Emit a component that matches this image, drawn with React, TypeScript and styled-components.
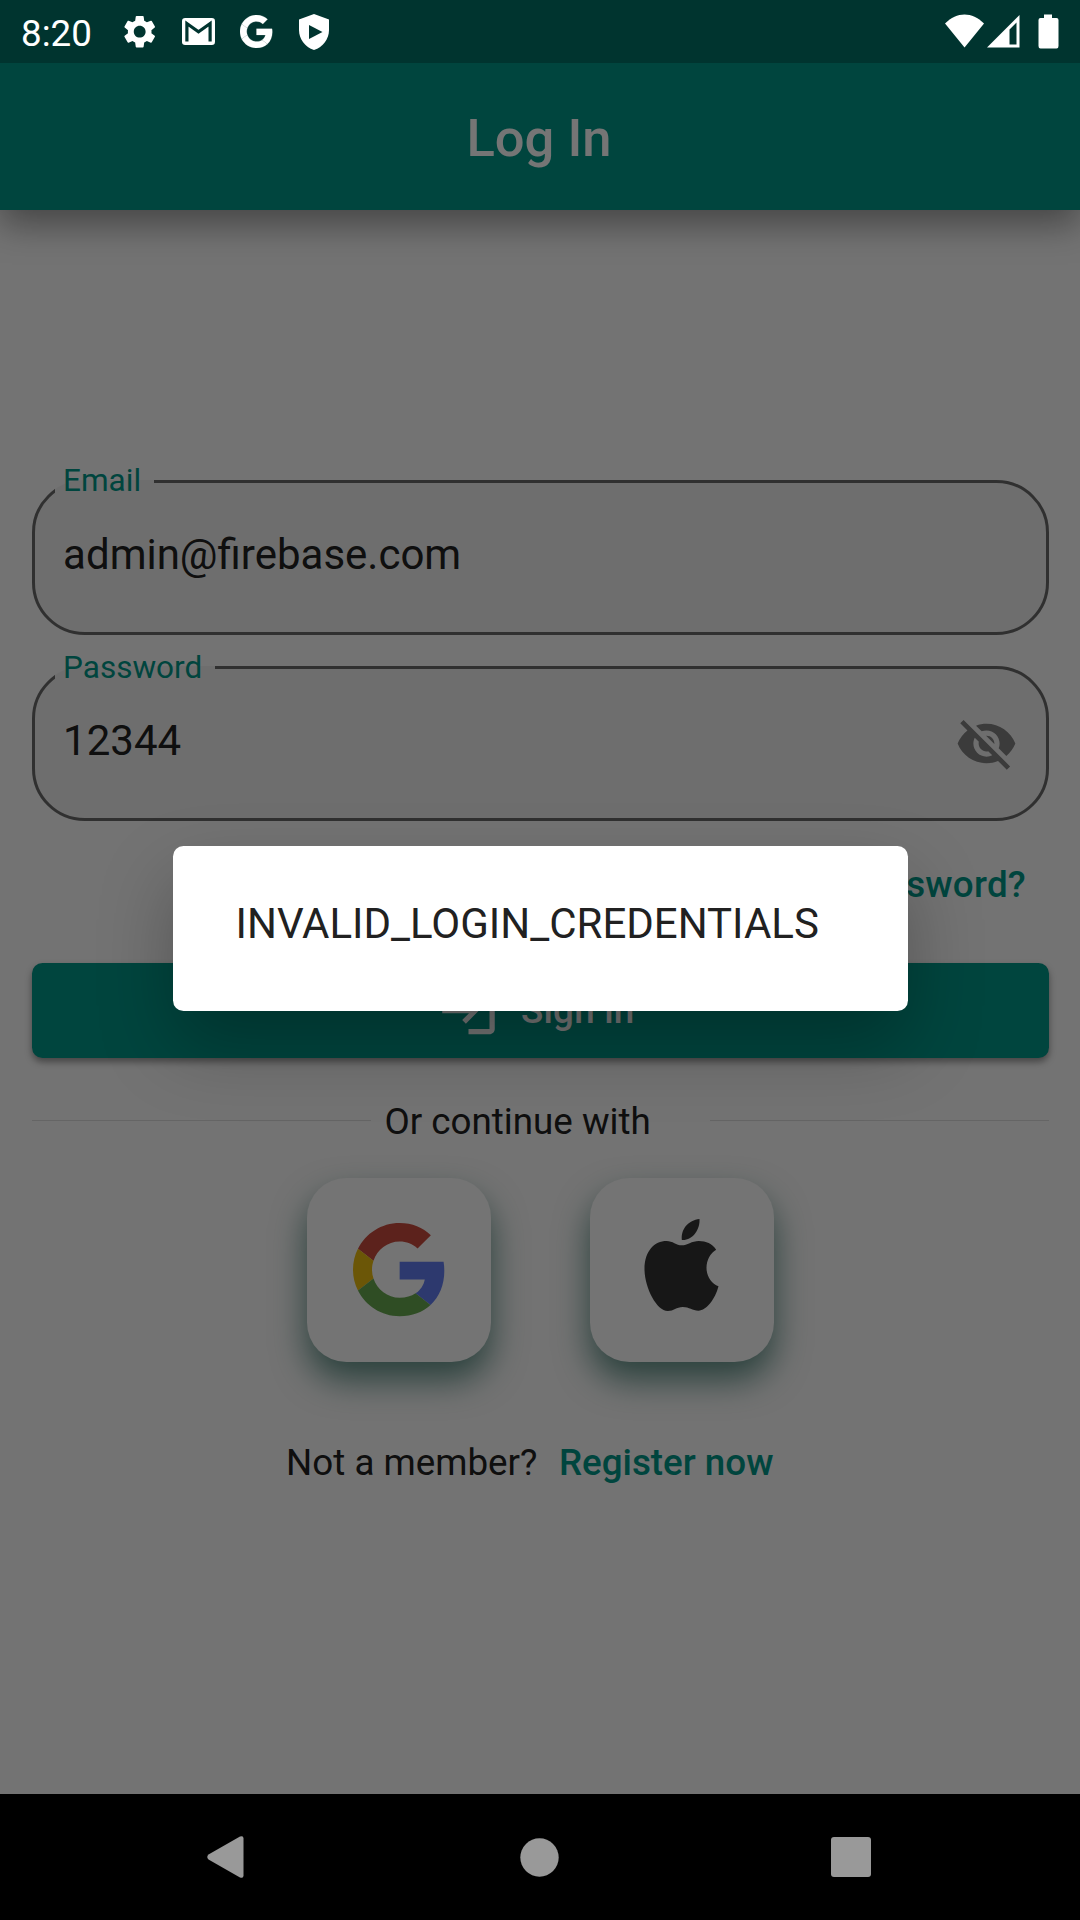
import React from "react";
import styled, { createGlobalStyle } from "styled-components";
import { MdLogin, MdSettings, MdVisibilityOff } from "react-icons/md";

const GlobalStyle = createGlobalStyle`
  * { box-sizing: border-box; }
  body { margin: 0; background: #000; }
`;

const teal = "#009688";

const Screen = styled.div`
  display: flex;
  flex-direction: column;
  width: 1080px;
  height: 1920px;
  overflow: hidden;
  font-family: Roboto, "Liberation Sans", sans-serif;
`;

const StatusBar = styled.header`
  display: flex;
  justify-content: space-between;
  height: 63px;
  padding: 0 21px 0 21px;
  background: #00342f;
  color: #fff;
`;

const StatusGroup = styled.div`
  display: flex;
  align-items: center;
`;

const Clock = styled.span`
  width: 90px;
  padding-top: 3px;
  font-size: 36.75px;
  line-height: 43px;
`;

const NoticeIcon = styled.span`
  display: flex;
  align-items: center;
  justify-content: center;
  width: 58px;
  height: 63px;
`;

const Glyph = styled.svg`
  display: block;
  flex: none;
`;

const AppArea = styled.div`
  position: relative;
  display: flex;
  flex-direction: column;
  height: 1731px;
  overflow: hidden;
  background: #fafafa;
`;

const AppBar = styled.div`
  display: flex;
  align-items: center;
  justify-content: center;
  flex: none;
  height: 147px;
  padding: 2px 2px 0 0;
  background: ${teal};
  box-shadow: 0 14px 34px rgba(0, 0, 0, 0.4);
`;

const Title = styled.h1`
  margin: 0;
  color: #fff;
  font-size: 52.5px;
  font-weight: 500;
  line-height: 62px;
`;

const Form = styled.main`
  display: flex;
  flex-direction: column;
  padding: 253px 31.5px 0;
`;

const Field = styled.fieldset`
  min-width: 0;
  height: 172px;
  margin: 0 0 14px;
  padding: 0 30px 0 20.6px;
  border: 3px solid #6a6a6a;
  border-radius: 52.5px;
  background: #f0f0f0;
`;

const FieldLabel = styled.legend<{ $raised?: boolean }>`
  padding: 0 13px ${(p) => (p.$raised ? 2 : 0)}px 8px;
  color: ${teal};
  font-size: 31.5px;
  line-height: ${(p) => (p.$raised ? 35 : 37)}px;
`;

const FieldRow = styled.div`
  display: flex;
  align-items: center;
  justify-content: space-between;
  height: 109px;
  padding-left: 8px;
  color: #212121;
  font-size: 42px;
  line-height: 49px;
`;

const EyeIcon = styled(MdVisibilityOff)`
  width: 63px;
  height: 63px;
  margin: 6px -2px 0 0;
  color: #808080;
`;

const Forgot = styled.a`
  align-self: flex-end;
  margin: 12.5px 22.5px 0 0;
  color: ${teal};
  font-size: 36.75px;
  font-weight: 500;
  line-height: 74px;
  letter-spacing: 0.26px;
`;

const SignIn = styled.button`
  display: flex;
  align-items: center;
  justify-content: center;
  gap: 21px;
  height: 94.5px;
  margin-top: 41.5px;
  padding: 0 41px 0 32.5px;
  border: 0;
  border-radius: 10.5px;
  background: ${teal};
  box-shadow: 0 4px 7px rgba(0, 0, 0, 0.4);
  color: #fff;
  font: 500 36.75px/43px Roboto, "Liberation Sans", sans-serif;
  letter-spacing: 0.26px;
`;

const LoginIcon = styled(MdLogin)`
  width: 63px;
  height: 63px;
`;

const Separator = styled.div`
  display: flex;
  align-items: center;
  height: 44px;
  margin-top: 42px;
`;

const Rule = styled.span`
  flex: none;
  width: 339px;
  height: 1px;
  margin-top: -2px;
  background: #dcdcdc;
`;

const Plain = styled.span`
  color: #212121;
  font-size: 36.75px;
  line-height: 43px;
  white-space: nowrap;
`;

const SeparatorText = styled(Plain)`
  flex: 1;
  padding-left: 14px;
`;

const Providers = styled.div`
  display: flex;
  justify-content: center;
  gap: 99.5px;
  margin: 34.5px 0 0 1px;
`;

const ProviderCard = styled.div<{ $pad?: string }>`
  display: flex;
  align-items: center;
  justify-content: center;
  width: 184px;
  height: 184px;
  padding: ${(p) => p.$pad ?? "0"};
  border-radius: 39.4px;
  background: #fcfcfc;
  box-shadow: 0 18px 34px rgba(0, 77, 64, 0.63);
`;

const Register = styled.div`
  display: flex;
  justify-content: center;
  gap: 21.5px;
  margin: 79px 20.5px 0 0;
`;

const RegisterLink = styled(Plain)`
  color: ${teal};
  font-weight: 500;
`;

const Scrim = styled.div`
  position: absolute;
  inset: 0;
  display: flex;
  align-items: center;
  justify-content: center;
  background: rgba(0, 0, 0, 0.541);
`;

const Dialog = styled.div`
  width: 735px;
  height: 165.5px;
  padding: 53px 63px 0;
  border-radius: 10.5px;
  background: #fff;
  box-shadow: 0 34px 76px -2px rgba(0, 0, 0, 0.28);
  color: #212121;
  font-size: 42px;
  line-height: 50px;
`;

const NavBar = styled.nav`
  display: grid;
  grid-template-columns: 451px 177px 445px;
  place-items: center;
  height: 126px;
  background: #000;
`;

const googleParts = [
  ["#c84b3d", "M24 9.5c3.54 0 6.71 1.22 9.21 3.6l6.85-6.85C35.9 2.38 30.47 0 24 0 14.62 0 6.51 5.38 2.56 13.22l7.98 6.19C12.43 13.72 17.74 9.5 24 9.5z"],
  ["#627df0", "M46.98 24.55c0-1.57-.15-3.09-.38-4.55H24v9.02h12.94c-.58 2.96-2.26 5.48-4.78 7.18l7.73 6c4.51-4.18 7.09-10.36 7.09-17.65z"],
  ["#e9bb10", "M10.53 28.59c-.48-1.45-.76-2.99-.76-4.59s.27-3.14.76-4.59l-7.98-6.19C.92 16.46 0 20.12 0 24c0 3.88.92 7.54 2.56 10.78l7.97-6.19z"],
  ["#67a850", "M24 48c6.48 0 11.93-2.13 15.89-5.81l-7.73-6c-2.15 1.45-4.92 2.3-8.16 2.3-6.26 0-11.57-4.22-13.47-9.91l-7.98 6.19C6.51 42.62 14.62 48 24 48z"],
];

const GoogleMark = ({ size, mono }: { size: number; mono?: boolean }) => (
  <Glyph width={size} height={size} viewBox="0 0 48 48">
    {googleParts.map(([fill, d]) => (
      <path key={fill} d={d} fill={mono ? "#fff" : fill} stroke={mono ? "#fff" : "none"} strokeWidth=".3" />
    ))}
  </Glyph>
);

const AppleMark = () => (
  <Glyph width="75" height="92" viewBox="254 207 224 276" fill="#323232">
    <path d="M367 286C350 286 340 273 321 273C285 273 255 303 255 357C255 412 291 483 325 483C343 483 350 471 370 471C390 471 398 482 417 482C441 482 467 447 477 409C455 400 441 379 441 353C441 330 452 310 470 299C458 281 440 273 418 273C397 273 383 286 367 286Z" />
    <path d="M420 207C422 240 398 272 367 270C363 238 387 210 420 207Z" />
  </Glyph>
);

export default function App() {
  return (
    <Screen>
      <GlobalStyle />
      <StatusBar>
        <StatusGroup>
          <Clock>8:20</Clock>
          <NoticeIcon>
            <MdSettings size={39.4} />
          </NoticeIcon>
          <NoticeIcon>
            <Glyph width="33" height="27" viewBox="0 0 33 27">
              <rect width="33" height="27" rx="3.2" fill="#fff" />
              <path d="M4.9 23.5V5.5L16.5 13.7L28.1 5.5V23.5" fill="none" stroke="#00342f" strokeWidth="3.2" />
            </Glyph>
          </NoticeIcon>
          <NoticeIcon>
            <GoogleMark size={33} mono />
          </NoticeIcon>
          <NoticeIcon>
            <Glyph width="30" height="36" viewBox="0 0 30 36">
              <path d="M15 0L30 5.5V16C30 25 24 33 15 36C6 33 0 25 0 16V5.5Z" fill="#fff" />
              <path d="M10 11L23.5 18L10 25Z" fill="#00342f" />
            </Glyph>
          </NoticeIcon>
        </StatusGroup>
        <StatusGroup>
          <Glyph width="115" height="36" viewBox="0 0 115 36" fill="#fff">
            <path d="M1 9.5C13-2.5 28-2.5 40 9.5L20.5 33.5Z" />
            <path fillRule="evenodd" d="M43 33.5L75.5 1V33.5ZM65.5 15.5V30.5H72.5V8.5Z" />
            <path d="M100 .5H108V4H112.5Q114.5 4 114.5 6V32Q114.5 34.5 112.5 34.5H96.5Q94.5 34.5 94.5 32V6Q94.5 4 96.5 4H100Z" />
          </Glyph>
        </StatusGroup>
      </StatusBar>

      <AppArea>
        <AppBar>
          <Title>Log In</Title>
        </AppBar>
        <Form>
          <Field>
            <FieldLabel $raised>Email</FieldLabel>
            <FieldRow>admin@firebase.com</FieldRow>
          </Field>
          <Field>
            <FieldLabel>Password</FieldLabel>
            <FieldRow>
              12344
              <EyeIcon />
            </FieldRow>
          </Field>
          <Forgot>Forgot Password?</Forgot>
          <SignIn>
            <LoginIcon />
            Sign in
          </SignIn>
          <Separator>
            <Rule />
            <SeparatorText>Or continue with</SeparatorText>
            <Rule />
          </Separator>
          <Providers>
            <ProviderCard $pad="0 0 0 2px">
              <GoogleMark size={93.3} />
            </ProviderCard>
            <ProviderCard $pad="0 2px 10px 0">
              <AppleMark />
            </ProviderCard>
          </Providers>
          <Register>
            <Plain>Not a member?</Plain>
            <RegisterLink>Register now</RegisterLink>
          </Register>
        </Form>
        <Scrim>
          <Dialog role="dialog">INVALID_LOGIN_CREDENTIALS</Dialog>
        </Scrim>
      </AppArea>

      <NavBar>
        <Glyph width="37" height="42" viewBox="0 0 37 42" fill="#999">
          <path d="M1.5 18.5L33 .6Q36.5-.8 36.5 2.5V39.5Q36.5 42.8 33 41.4L1.5 23.5Q-1 21 1.5 18.5Z" />
        </Glyph>
        <Glyph width="39" height="39" viewBox="0 0 39 39" fill="#999">
          <circle cx="19.5" cy="19.5" r="19.2" />
        </Glyph>
        <Glyph width="40" height="40" viewBox="0 0 40 40" fill="#999">
          <rect width="40" height="40" rx="3" />
        </Glyph>
      </NavBar>
    </Screen>
  );
}
